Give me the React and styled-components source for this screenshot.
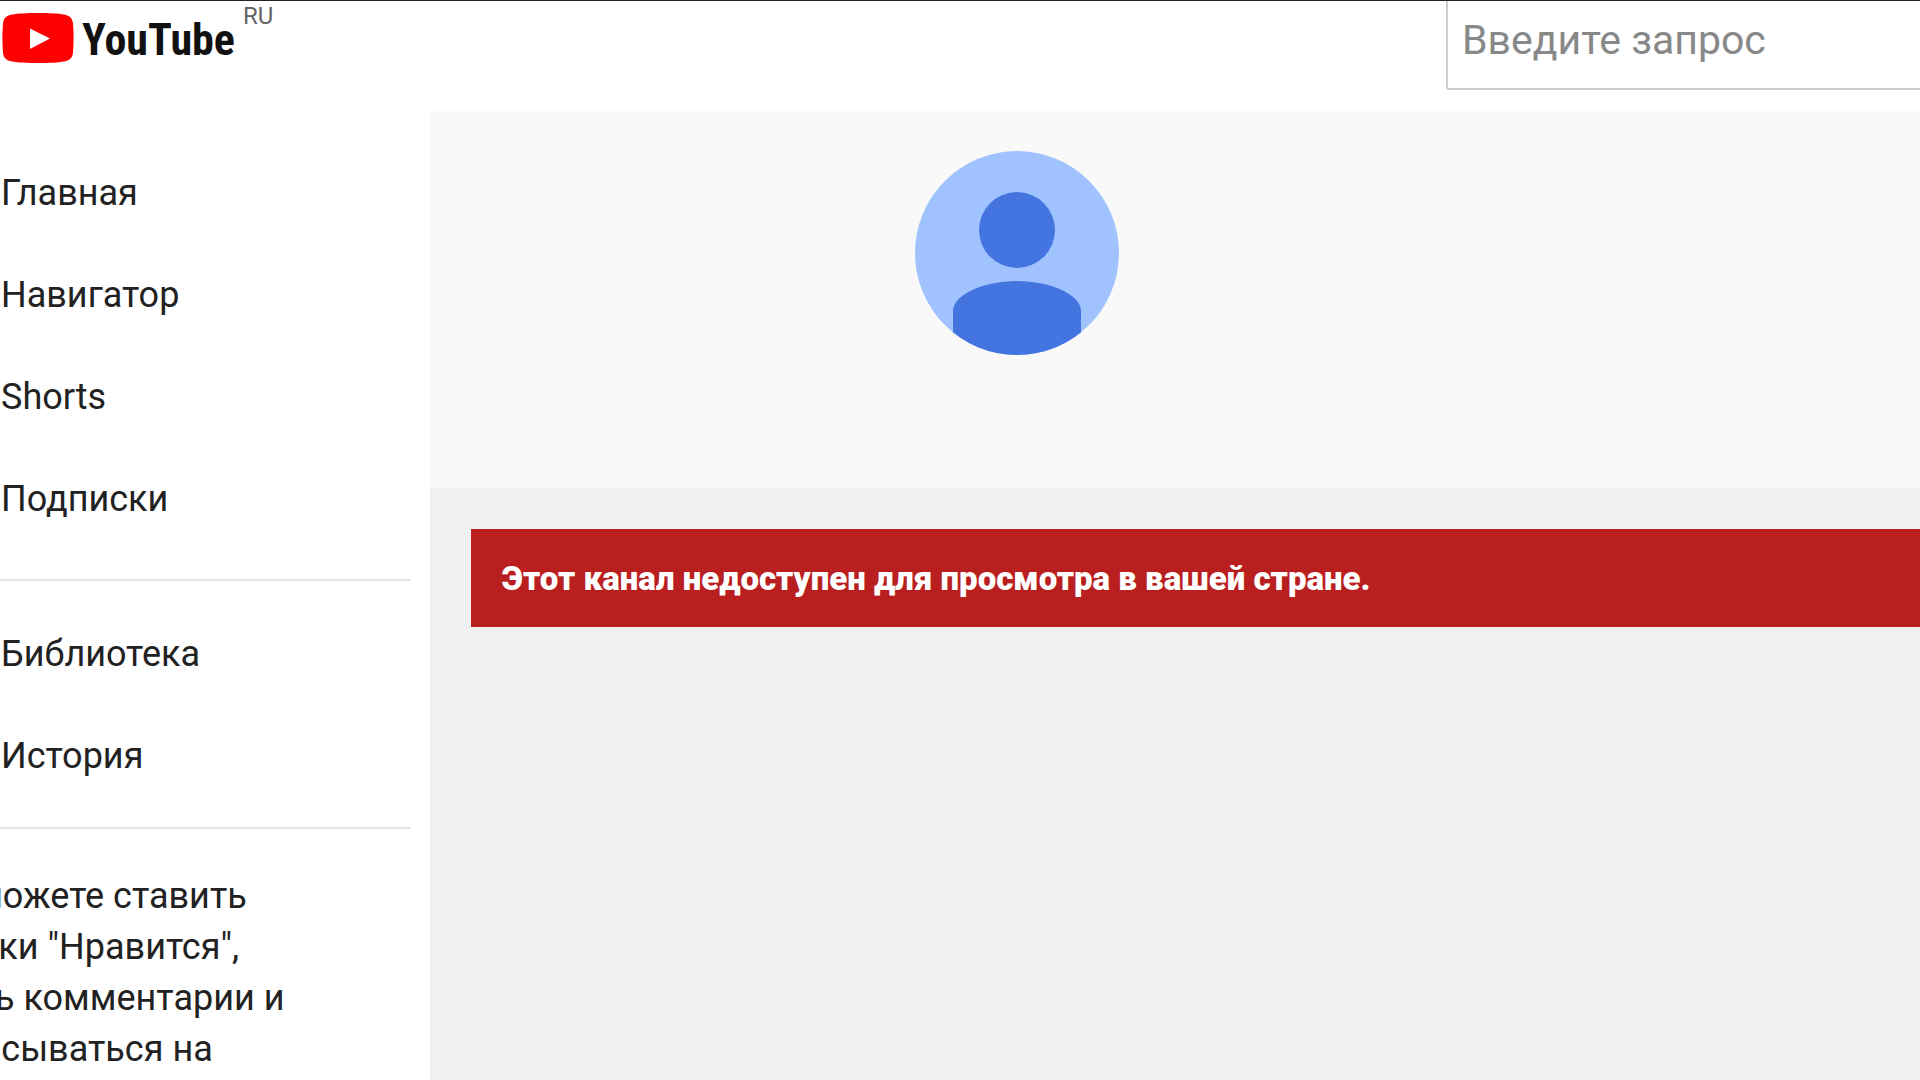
import React from 'react';
import styled, { createGlobalStyle } from 'styled-components';

const GlobalStyle = createGlobalStyle`
    * {
        box-sizing: border-box;
    }
    body {
        margin: 0;
        background: #fff;
        color: #222;
        font-family: Roboto, 'Noto Sans', sans-serif;
    }
`;

const Page = styled.div`
    display: flex;
    flex-direction: column;
    height: 100vh;
    overflow: hidden;
    border-top: 1px solid #222;
`;

const Header = styled.header`
    display: flex;
    justify-content: space-between;
    align-items: flex-start;
    flex: none;
    height: 110px;
`;

const LogoLink = styled.a`
    display: flex;
    align-items: flex-start;
    gap: 8px;
    padding: 3px 0 0 2px;
    color: #111;
    text-decoration: none;
`;

const LogoMark = styled.svg`
    width: 72px;
    height: 50px;
    margin-top: 9px;
`;

const LogoText = styled.span`
    font-family: 'Roboto Condensed', 'Liberation Sans Narrow', 'Liberation Sans', sans-serif;
    font-size: 44px;
    font-weight: 700;
    line-height: 72px;
`;

const Country = styled.span`
    color: #666;
    font-size: 24px;
    line-height: 24px;
`;

const SearchInput = styled.input`
    width: 474px;
    height: 89px;
    padding: 0 14px 10px;
    border: solid #ccc;
    border-width: 0 0 2px 2px;
    border-radius: 0 0 0 3px;
    background: #fff;
    font-family: inherit;
    font-size: 41px;
    outline: none;

    &::placeholder {
        color: #888;
        opacity: 1;
    }
`;

const Body = styled.div`
    display: flex;
    flex: 1;
    min-height: 0;
`;

const Sidebar = styled.nav`
    flex: none;
    width: 430px;
    padding-right: 19px;
    overflow: hidden;
    font-size: 36px;
`;

const NavSection = styled.ul`
    margin: 0;
    padding: ${({ $compact }) => ($compact ? '22px 0 20px' : '31px 0 29px')};
    list-style: none;
    border-bottom: 2px solid #e5e5e5;
`;

const NavLink = styled.a`
    display: block;
    padding-left: 1px;
    color: #222;
    line-height: 102px;
    text-decoration: none;
`;

const SignInHint = styled.p`
    width: 400px;
    margin: 42px 0 0 -102px;
    line-height: 51px;
`;

const Content = styled.main`
    flex: 1;
    min-width: 0;
    background: #f0f0f0;
`;

const ChannelHeader = styled.section`
    height: 377px;
    padding: 40px 485px;
    background: #f9f9f9;
`;

const Avatar = styled.svg`
    display: block;
    width: 204px;
    height: 204px;
`;

const Alert = styled.div`
    margin: 41px 0 0 41px;
    padding: 25px 31px 23px;
    background: #b91f1f;
    color: #fff;
    font-size: 33px;
    font-weight: 900;
    line-height: 50px;
`;

const mainLinks = ['Главная', 'Навигатор', 'Shorts', 'Подписки'];
const libraryLinks = ['Библиотека', 'История'];

const NavList = ({ items, compact }) => (
    <NavSection $compact={compact}>
        {items.map((item) => (
            <li key={item}>
                <NavLink href="#">{item}</NavLink>
            </li>
        ))}
    </NavSection>
);

const App = () => (
    <>
        <GlobalStyle />
        <Page>
            <Header>
                <LogoLink href="#">
                    <LogoMark viewBox="0 0 72 50" aria-hidden="true">
                        <path
                            d="M10 1.5C20-.5 52-.5 62 1.5c6 1 8.500 4 9 9 .8 9 .8 20 0 29-.5 5-3 8-9 9-10 2-42 2-52 0-6-1-8.500-4-9-9-.8-9-.8-20 0-29 .5-5 3-8 9-9z"
                            fill="#f00"
                        />
                        <path d="M28 15.500l20 10-20 10.500z" fill="#fff" />
                    </LogoMark>
                    <LogoText>YouTube</LogoText>
                    <Country>RU</Country>
                </LogoLink>
                <SearchInput type="text" placeholder="Введите запрос" aria-label="Введите запрос" />
            </Header>
            <Body>
                <Sidebar>
                    <NavList items={mainLinks} />
                    <NavList items={libraryLinks} compact />
                    <SignInHint>
                        Вы сможете ставить отметки "Нравится", писать комментарии и подписываться на каналы.
                    </SignInHint>
                </Sidebar>
                <Content>
                    <ChannelHeader>
                        <Avatar viewBox="0 0 204 204" aria-hidden="true">
                            <clipPath id="avatar-circle">
                                <circle cx="102" cy="102" r="102" />
                            </clipPath>
                            <g clipPath="url(#avatar-circle)">
                                <rect width="204" height="204" fill="#a0c3ff" />
                                <circle cx="102" cy="79" r="38" fill="#4374e0" />
                                <path
                                    d="M38 204v-44c0-16 30-30 64-30s64 14 64 30v44z"
                                    fill="#4374e0"
                                />
                            </g>
                        </Avatar>
                    </ChannelHeader>
                    <Alert role="alert">Этот канал недоступен для просмотра в вашей стране.</Alert>
                </Content>
            </Body>
        </Page>
    </>
);

export default App;
